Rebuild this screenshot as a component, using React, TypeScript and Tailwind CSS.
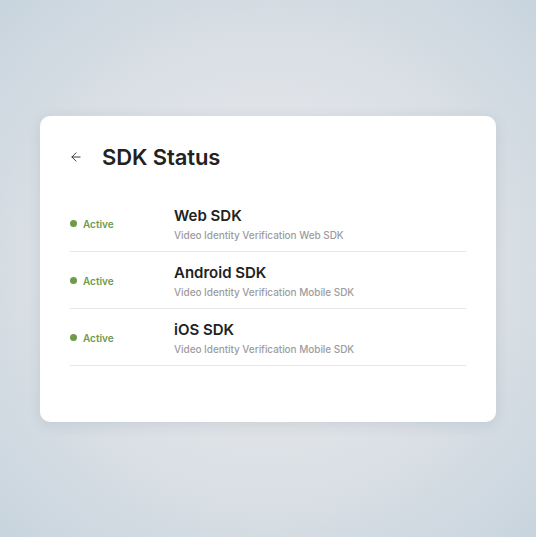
import React from "react";

const rows = [
  { name: "Web SDK", desc: "Video Identity Verification Web SDK" },
  { name: "Android SDK", desc: "Video Identity Verification Mobile SDK" },
  { name: "iOS SDK", desc: "Video Identity Verification Mobile SDK" },
];

export default function App() {
  return (
    <div
      className="w-[536px] h-[537px] flex items-center justify-center bg-[radial-gradient(ellipse_70%_68%_at_50%_50%,#e9eaed_0%,#dee2e7_50%,#c9d5de_100%)] font-['Inter',sans-serif]"
    >
      <div className="w-[456px] h-[306px] bg-white rounded-[10px] shadow-[0_3px_14px_rgba(60,70,90,0.12)] pt-[27px] px-[30px]">
        <div className="flex items-center h-[28px]">
          <svg width="14" height="14" viewBox="0 0 24 24" fill="none" stroke="#2d2d2d" strokeWidth="1.6" strokeLinecap="round" strokeLinejoin="round" className="ml-[-1px]">
            <path d="M19 12H5" />
            <path d="M12 19l-7-7 7-7" />
          </svg>
          <h1 className="ml-[19px] text-[22px] leading-[28px] font-semibold text-[#222] tracking-[-0.1px]">SDK Status</h1>
        </div>
        <div className="mt-[24px]">
          {rows.map((r) => (
            <div key={r.name} className="flex items-center pt-[11px] pb-[9px] border-b border-[#e6e7ea]">
              <div className="w-[104px] flex items-center">
                <span className="w-[7px] h-[7px] rounded-full bg-[#6f9a4b]" />
                <span className="ml-[6px] text-[10px] leading-[14px] font-semibold text-[#6f9a4b]">Active</span>
              </div>
              <div className="flex flex-col">
                <span className="text-[15px] leading-[20px] font-semibold text-[#222]">{r.name}</span>
                <span className="mt-[2px] text-[10px] leading-[14px] font-medium text-[#9d9da1] tracking-[-0.05px]">{r.desc}</span>
              </div>
            </div>
          ))}
        </div>
      </div>
    </div>
  );
}
